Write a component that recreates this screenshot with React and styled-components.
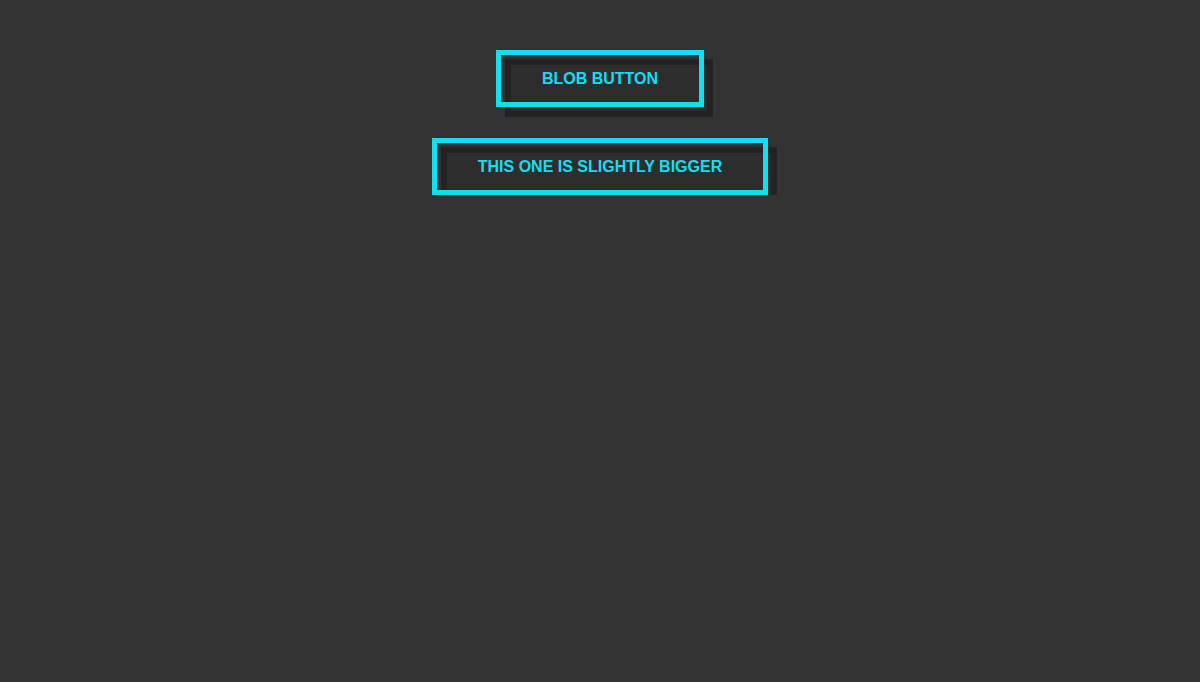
import React from "react";
import styled, { createGlobalStyle } from "styled-components";

const GlobalStyle = createGlobalStyle`
  html, body {
    margin: 0;
    background: #333333;
  }
`;

const Page = styled.div`
  display: flex;
  flex-direction: column;
  align-items: center;
  gap: 31px;
  padding-top: 50px;
  font-family: "Liberation Sans", Arial, sans-serif;
`;

const BlobButton = styled.button`
  position: relative;
  z-index: 0;
  display: flex;
  align-items: center;
  justify-content: center;
  height: 57px;
  padding: 0 46px;
  border: none;
  background: transparent;
  color: #14def2;
  font-family: inherit;
  font-size: 16px;
  font-weight: bold;
  line-height: 18px;
  text-transform: uppercase;
  cursor: pointer;

  &::before {
    content: "";
    position: absolute;
    top: 9px;
    left: 9px;
    right: -9px;
    bottom: -10px;
    border: 6px solid #232323;
    background: #2d2d2d;
    z-index: -1;
  }

  &::after {
    content: "";
    position: absolute;
    inset: 0;
    border: 5px solid #14def2;
    z-index: -1;
  }
`;

const App = () => {
  return (
    <>
      <GlobalStyle />
      <Page>
        <BlobButton>Blob Button</BlobButton>
        <BlobButton>This one is slightly bigger</BlobButton>
      </Page>
    </>
  );
};

export default App;
